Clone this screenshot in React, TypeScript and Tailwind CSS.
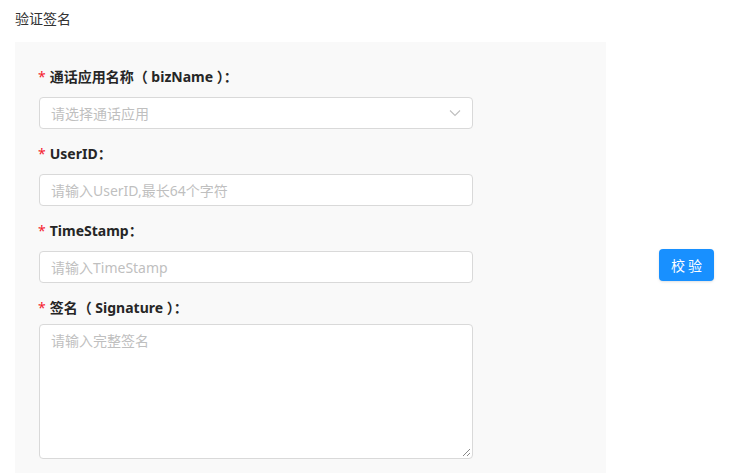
import React from "react";

const font = { fontFamily: '"Noto Sans", "Noto Sans CJK SC", sans-serif' };

function Label({ children, className = "" }: { children: React.ReactNode; className?: string }) {
  return (
    <div className={"flex items-center h-[22px] leading-[22px] pl-[23px] text-[14px] font-bold text-[#262626] " + className}>
      <span className="text-[#f5222d] font-normal text-[14px] mr-[4px] leading-none">*</span>
      <span>{children}</span>
    </div>
  );
}

function Input({ placeholder }: { placeholder: string }) {
  return (
    <div className="ml-[24px] w-[434px] h-[32px] rounded-[4px] border border-[#d9d9d9] bg-white flex items-center pl-[11px] text-[14px] text-[#bfbfbf]">
      {placeholder}
    </div>
  );
}

export default function App() {
  return (
    <div className="w-[745px] h-[473px] overflow-hidden bg-white flex items-start" style={font}>
      <div className="flex flex-col pl-[15px]">
        <div className="h-[42px] pt-[8px] text-[14px] text-[#333333] leading-[22px]">验证签名</div>
        <div className="w-[591px] h-[440px] bg-[#f9f9f9] pt-[24px] flex flex-col">
          <Label>通话应用名称（ bizName ）：</Label>
          <div className="mt-[9px]">
            <div className="ml-[24px] w-[434px] h-[32px] rounded-[4px] border border-[#d9d9d9] bg-white flex items-center justify-between pl-[11px] pr-[11px] text-[14px] text-[#bfbfbf]">
              <span>请选择通话应用</span>
              <svg width="12" height="12" viewBox="0 0 12 12" fill="none">
                <path d="M1 3.5L6 8.5L11 3.5" stroke="#bfbfbf" strokeWidth="1.1" />
              </svg>
            </div>
          </div>
          <Label className="mt-[14px]">UserID：</Label>
          <div className="mt-[9px]">
            <Input placeholder="请输入UserID,最长64个字符" />
          </div>
          <Label className="mt-[14px]">TimeStamp：</Label>
          <div className="mt-[9px]">
            <Input placeholder="请输入TimeStamp" />
          </div>
          <Label className="mt-[14px]">签名（ Signature ）：</Label>
          <div className="mt-[5px] ml-[24px] relative w-[434px] h-[135px] rounded-[4px] border border-[#d9d9d9] bg-white pl-[11px] pt-[5px] text-[14px] leading-[22px] text-[#bfbfbf]">
            请输入完整签名
            <svg className="absolute right-[1px] bottom-[1px]" width="10" height="10" viewBox="0 0 10 10">
              <path d="M9 2L2 9M9 6L6 9" stroke="#888" strokeWidth="1" />
            </svg>
          </div>
        </div>
      </div>
      <button className="ml-[53px] mt-[249px] w-[55px] h-[32px] rounded-[4px] bg-[#1890ff] text-white text-[14px] tracking-[3px] pl-[3px] shadow-sm">
        校验
      </button>
    </div>
  );
}
